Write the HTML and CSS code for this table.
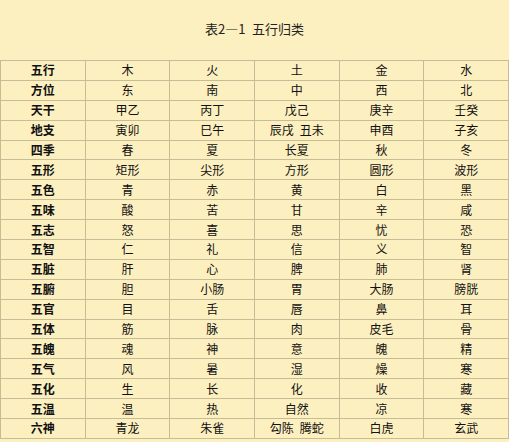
FILE: index.html
```html
<!DOCTYPE html>
<html lang="zh">
<head>
<meta charset="utf-8">
<link rel="stylesheet" href="styles.css">
</head>
<body>
<div class="page">
  <h1 class="title">表2—1&ensp;五行归类</h1>
  <table class="wx">
    <tbody>
      <tr><th>五行</th><td>木</td><td>火</td><td>土</td><td>金</td><td>水</td></tr>
      <tr><th>方位</th><td>东</td><td>南</td><td>中</td><td>西</td><td>北</td></tr>
      <tr><th>天干</th><td>甲乙</td><td>丙丁</td><td>戊己</td><td>庚辛</td><td>壬癸</td></tr>
      <tr><th>地支</th><td>寅卯</td><td>巳午</td><td>辰戌&ensp;丑未</td><td>申酉</td><td>子亥</td></tr>
      <tr><th>四季</th><td>春</td><td>夏</td><td>长夏</td><td>秋</td><td>冬</td></tr>
      <tr><th>五形</th><td>矩形</td><td>尖形</td><td>方形</td><td>圆形</td><td>波形</td></tr>
      <tr><th>五色</th><td>青</td><td>赤</td><td>黄</td><td>白</td><td>黑</td></tr>
      <tr><th>五味</th><td>酸</td><td>苦</td><td>甘</td><td>辛</td><td>咸</td></tr>
      <tr><th>五志</th><td>怒</td><td>喜</td><td>思</td><td>忧</td><td>恐</td></tr>
      <tr><th>五智</th><td>仁</td><td>礼</td><td>信</td><td>义</td><td>智</td></tr>
      <tr><th>五脏</th><td>肝</td><td>心</td><td>脾</td><td>肺</td><td>肾</td></tr>
      <tr><th>五腑</th><td>胆</td><td>小肠</td><td>胃</td><td>大肠</td><td>膀胱</td></tr>
      <tr><th>五官</th><td>目</td><td>舌</td><td>唇</td><td>鼻</td><td>耳</td></tr>
      <tr><th>五体</th><td>筋</td><td>脉</td><td>肉</td><td>皮毛</td><td>骨</td></tr>
      <tr><th>五魄</th><td>魂</td><td>神</td><td>意</td><td>魄</td><td>精</td></tr>
      <tr><th>五气</th><td>风</td><td>暑</td><td>湿</td><td>燥</td><td>寒</td></tr>
      <tr><th>五化</th><td>生</td><td>长</td><td>化</td><td>收</td><td>藏</td></tr>
      <tr><th>五温</th><td>温</td><td>热</td><td>自然</td><td>凉</td><td>寒</td></tr>
      <tr><th>六神</th><td>青龙</td><td>朱雀</td><td>勾陈&ensp;腾蛇</td><td>白虎</td><td>玄武</td></tr>
    </tbody>
  </table>
</div>
</body>
</html>
```

FILE: styles.css
```css
html, body {
  margin: 0;
  padding: 0;
  background: #fdf0c0;
}
body {
  font-family: "Noto Sans CJK SC", "Noto Sans", sans-serif;
  color: #111;
}
.page {
  width: 509px;
}
.title {
  margin: 0;
  height: 60px;
  line-height: 58px;
  text-align: center;
  font-size: 13px;
  font-weight: normal;
  color: #222;
}
.wx {
  width: 509px;
  border-collapse: collapse;
  table-layout: fixed;
}
.wx th, .wx td {
  border: 1px solid #c6bc96;
  height: 18.9px;
  padding: 0;
  text-align: center;
  font-size: 12px;
  line-height: 18px;
}
.wx th {
  font-weight: bold;
}
```
